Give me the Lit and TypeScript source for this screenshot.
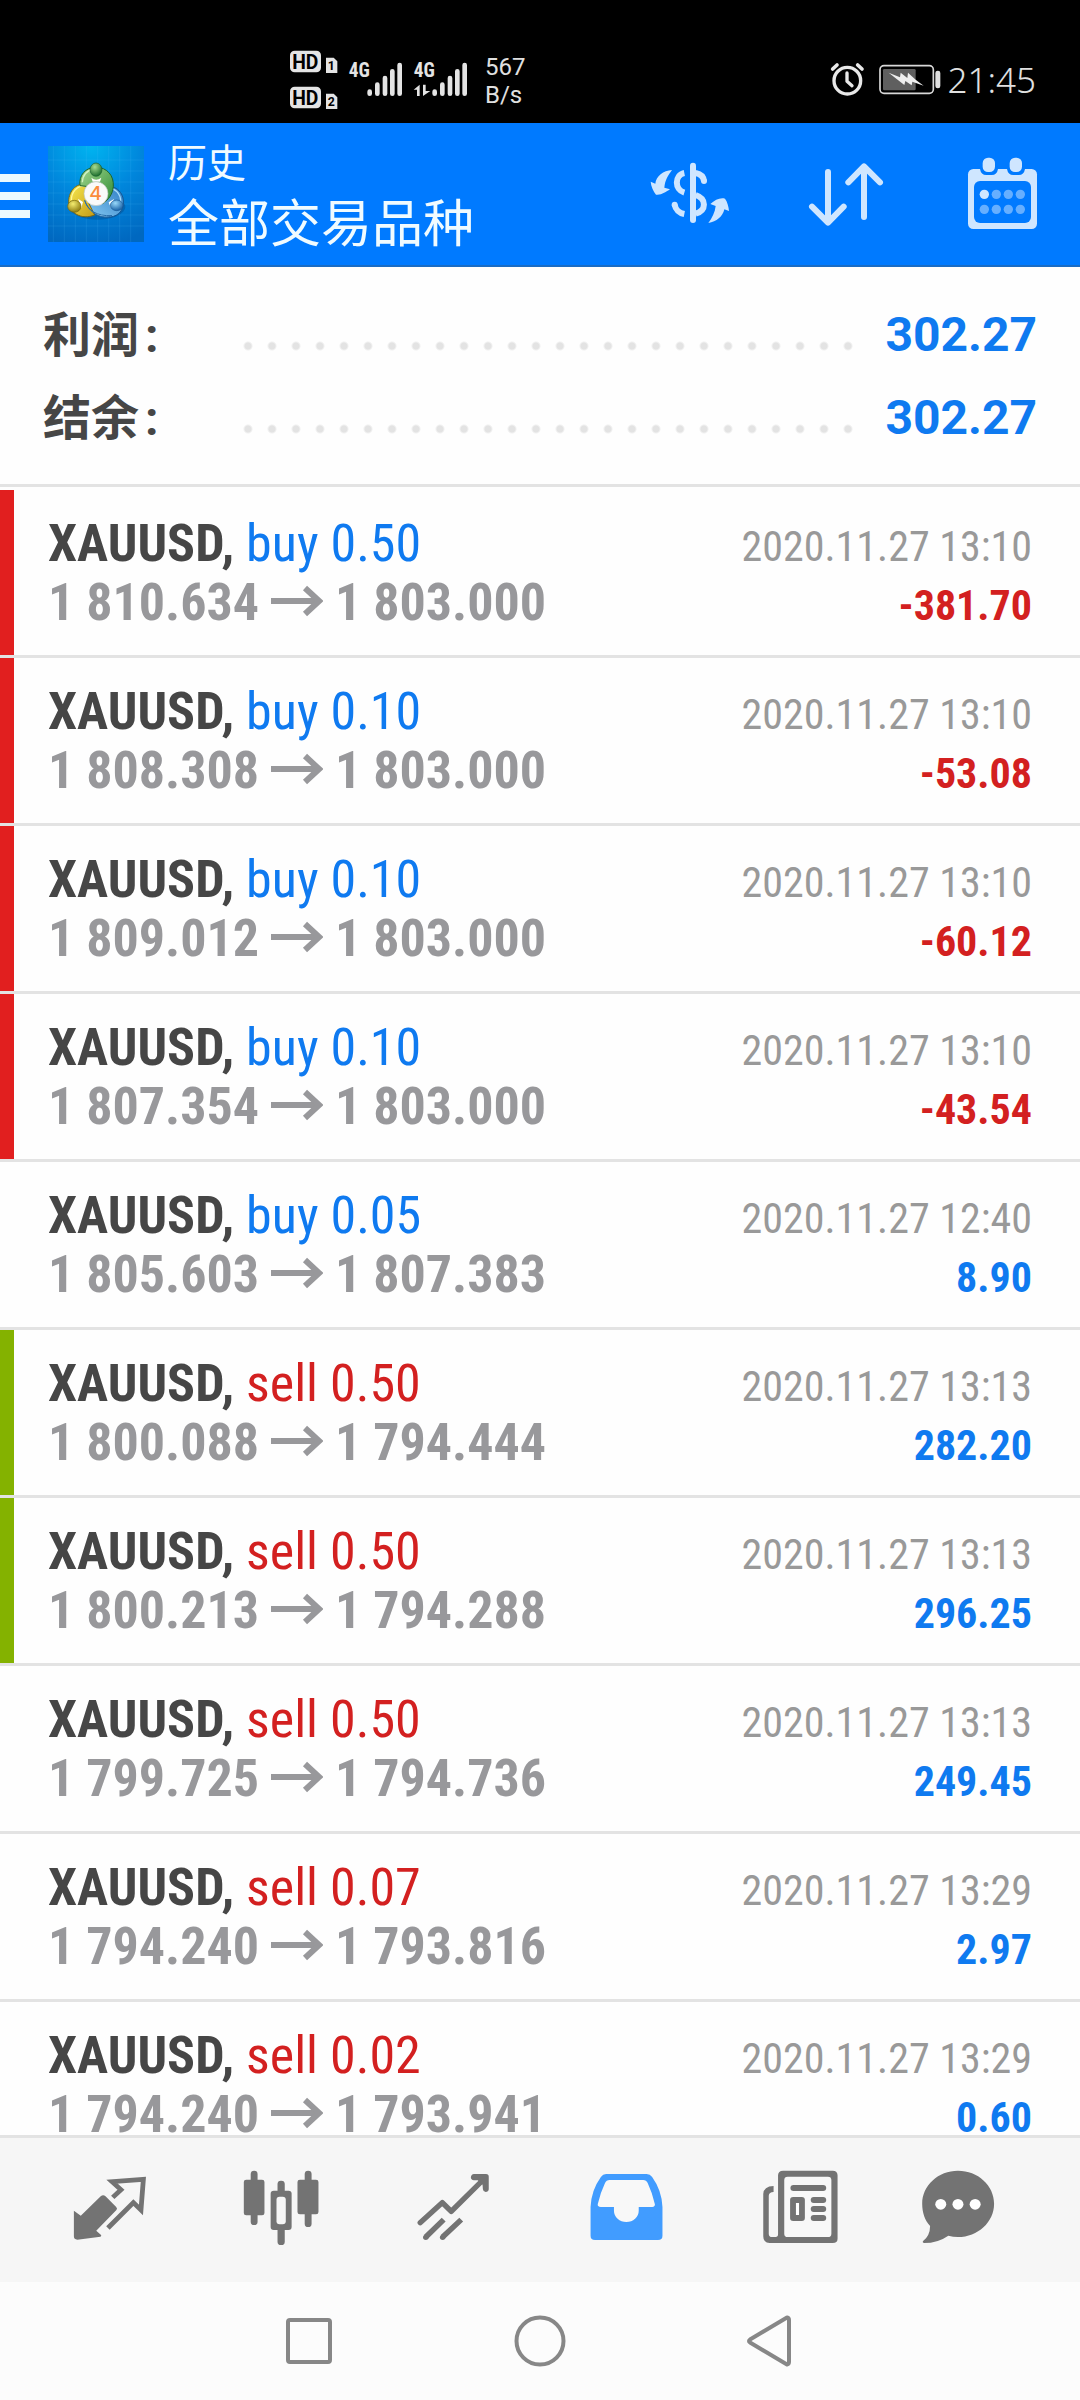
import { LitElement, html, css, svg } from "lit";
import { customElement, property } from "lit/decorators.js";
import { classMap } from "lit/directives/class-map.js";

interface Deal {
  side: "buy" | "sell";
  volume: string;
  open: string;
  close: string;
  time: string;
  profit: string;
  mark?: "sl" | "tp";
}

const deals: Deal[] = [
  { side: "buy", volume: "0.50", open: "1 810.634", close: "1 803.000", time: "2020.11.27 13:10", profit: "-381.70", mark: "sl" },
  { side: "buy", volume: "0.10", open: "1 808.308", close: "1 803.000", time: "2020.11.27 13:10", profit: "-53.08", mark: "sl" },
  { side: "buy", volume: "0.10", open: "1 809.012", close: "1 803.000", time: "2020.11.27 13:10", profit: "-60.12", mark: "sl" },
  { side: "buy", volume: "0.10", open: "1 807.354", close: "1 803.000", time: "2020.11.27 13:10", profit: "-43.54", mark: "sl" },
  { side: "buy", volume: "0.05", open: "1 805.603", close: "1 807.383", time: "2020.11.27 12:40", profit: "8.90" },
  { side: "sell", volume: "0.50", open: "1 800.088", close: "1 794.444", time: "2020.11.27 13:13", profit: "282.20", mark: "tp" },
  { side: "sell", volume: "0.50", open: "1 800.213", close: "1 794.288", time: "2020.11.27 13:13", profit: "296.25", mark: "tp" },
  { side: "sell", volume: "0.50", open: "1 799.725", close: "1 794.736", time: "2020.11.27 13:13", profit: "249.45" },
  { side: "sell", volume: "0.07", open: "1 794.240", close: "1 793.816", time: "2020.11.27 13:29", profit: "2.97" },
  { side: "sell", volume: "0.02", open: "1 794.240", close: "1 793.941", time: "2020.11.27 13:29", profit: "0.60" },
];

const signalBars = (x: number) => svg`
  <g stroke="#e4e4e4" stroke-width="14" stroke-linecap="round">
    <path d="M${x} 185v6M${x + 23} 164v27M${x + 46} 144v47M${x + 68} 124v67M${x + 90} 105v86"/>
  </g>`;

@customElement("status-bar")
export class StatusBar extends LitElement {
  static styles = css`
    :host {
      display: flex;
      align-items: flex-start;
      justify-content: space-between;
      height: 123px;
      flex: none;
      box-sizing: border-box;
      padding: 48px 44px 0 290px;
      background: #000;
      color: #e0e0e0;
      font-family: Roboto, "Liberation Sans", sans-serif;
    }
    .group { display: flex; align-items: flex-start; }
    .speed {
      margin-left: 17px;
      width: 40px;
      font-size: 24px;
      line-height: 28px;
      text-align: left;
      padding-top: 5px;
    }
    .icons { display: block; }
    .time {
      font: 300 35px/64px "Noto Sans", "Open Sans", sans-serif;
      margin-left: 6px;
    }
    .txt { font-family: Roboto, "Liberation Sans", sans-serif; font-weight: 700; }
    .narrow { font-family: "Roboto Condensed", "Liberation Sans Narrow", Roboto, sans-serif; font-weight: 700; }
  `;
  render() {
    return html`
      <div class="group">
        <svg class="icons" width="178" height="62" viewBox="60 54 534 186" role="img" aria-label="Signal">
          <rect x="60" y="62" width="93" height="65" rx="14" fill="#e4e4e4"/>
          <text class="txt" x="106" y="116" font-size="58" text-anchor="middle" fill="#000">HD</text>
          <path d="M168 83h23l11 11v35h-34z" fill="#e4e4e4"/>
          <text class="txt" x="184" y="121" font-size="37" text-anchor="middle" fill="#000">1</text>
          <rect x="60" y="170" width="93" height="65" rx="14" fill="#e4e4e4"/>
          <text class="txt" x="106" y="224" font-size="58" text-anchor="middle" fill="#000">HD</text>
          <path d="M168 191h23l11 11v35h-34z" fill="#e4e4e4"/>
          <text class="txt" x="184" y="229" font-size="37" text-anchor="middle" fill="#000">2</text>
          <text class="narrow" x="236" y="142" font-size="58" fill="#e4e4e4">4G</text>
          ${signalBars(299)}
          <text class="narrow" x="431" y="142" font-size="58" fill="#e4e4e4">4G</text>
          ${signalBars(494)}
          <path d="M449 164v34h-8v-19h-10zM459 198v-34h8v19h14z" fill="#e4e4e4"/>
        </svg>
        <div class="speed">567<br />B/s</div>
      </div>
      <div class="group">
        <svg class="icons" width="112" height="56" viewBox="88 24 336 168" role="img" aria-label="Alarm, battery charging">
          <circle cx="140" cy="122" r="40" fill="none" stroke="#e8e8e8" stroke-width="10"/>
          <path d="M139 99v25l15 13" fill="none" stroke="#e8e8e8" stroke-width="10" stroke-linecap="round" stroke-linejoin="round"/>
          <path d="M96 87l13-12M184 87l-13-12" stroke="#e8e8e8" stroke-width="11" stroke-linecap="round"/>
          <rect x="238" y="77" width="160" height="83" rx="12" fill="none" stroke="#d8d8d8" stroke-width="5"/>
          <rect x="247" y="87" width="98" height="64" rx="4" fill="#5f5f5f"/>
          <path d="M264 98l34 14 2-14 20 16 2-16 23 21 24 18-34-12-2 11-19-13-3 12z" fill="#eee"/>
          <rect x="404" y="92" width="15" height="53" rx="7" fill="#e0e0e0"/>
        </svg>
        <span class="time">21:45</span>
      </div>
    `;
  }
}

@customElement("app-header")
export class AppHeader extends LitElement {
  static styles = css`
    :host {
      display: flex;
      align-items: center;
      flex: none;
      height: 144px;
      box-sizing: border-box;
      background: #007aff;
      border-bottom: 2px solid #1a6cc4;
      color: #f0fbff;
      font-family: "Noto Sans CJK SC", sans-serif;
    }
    button { border: 0; padding: 0; background: none; display: block; cursor: pointer; }
    svg { display: block; }
    .menu { width: 48px; flex: none; }
    .titles { flex: 1; padding: 0 0 4px 24px; min-width: 0; }
    .section { margin: 0; font-size: 39px; line-height: 56px; }
    .filter { margin: 0; font-size: 51px; line-height: 64px; font-weight: 400; }
    .actions { display: flex; flex: none; }
    .four { font-family: Inter, sans-serif; font-weight: 500; }
  `;
  render() {
    return html`
      <button class="menu" aria-label="Menu">
        <svg width="48" height="48" viewBox="0 0 48 48" fill="#ebf9ff">
          <path d="M0 4h30v8H0zM0 22h30v8H0zM0 40h30v8H0z"/>
        </svg>
      </button>
      <svg width="96" height="96" viewBox="144 51 288 288" role="img" aria-label="MetaTrader 4">
        <defs>
          <radialGradient id="bg" cx=".45" cy="0" r="1.05">
            <stop offset="0" stop-color="#00b4f0"/><stop offset=".5" stop-color="#0086dc"/><stop offset="1" stop-color="#0068c0"/>
          </radialGradient>
          <linearGradient id="gr" x1="0" y1="0" x2="1" y2="1"><stop offset="0" stop-color="#a4d890"/><stop offset="1" stop-color="#2c8a34"/></linearGradient>
          <linearGradient id="ye" x1="0" y1="0" x2="1" y2="1"><stop offset="0" stop-color="#f8ec50"/><stop offset="1" stop-color="#c79b18"/></linearGradient>
          <linearGradient id="bl" x1="1" y1="0" x2="0" y2="1"><stop offset="0" stop-color="#2d7cc4"/><stop offset="1" stop-color="#88ccf4"/></linearGradient>
          <radialGradient id="hg" cx=".4" cy=".3" r=".7"><stop offset="0" stop-color="#a8dc90"/><stop offset="1" stop-color="#1c6e2c"/></radialGradient>
          <radialGradient id="hy" cx=".4" cy=".3" r=".7"><stop offset="0" stop-color="#f4ec70"/><stop offset="1" stop-color="#8e7c10"/></radialGradient>
          <radialGradient id="hb" cx=".4" cy=".3" r=".7"><stop offset="0" stop-color="#98d8fa"/><stop offset="1" stop-color="#1c64a8"/></radialGradient>
        </defs>
        <path d="M144 51h288v288H144z" fill="url(#bg)"/>
        <path d="M160 51v288M193 51v288M226 51v288M259 51v288M293 51v288M326 51v288M359 51v288M392 51v288M144 93h288M144 126h288M144 159h288M144 192h288M144 225h288M144 258h288M144 291h288" stroke="#5cc4ff" stroke-opacity=".22" stroke-width="2"/>
        <ellipse cx="292" cy="234" rx="84" ry="38" fill="#00407c" opacity=".35"/>
        <!-- three overlapping discs, each with a pale rim and a head -->
        <path d="M300 176C344 160 374 190 370 226C366 258 338 268 310 264C286 260 268 246 260 226z" fill="url(#bl)" stroke="#155693" stroke-width="3"/>
        <path d="M316 180C344 172 364 194 362 222" fill="none" stroke="#a9dcfa" stroke-width="4"/>
        <path d="M270 168C232 156 206 184 206 218C208 252 244 274 284 258L262 214z" fill="url(#ye)" stroke="#796714" stroke-width="3"/>
        <path d="M258 172C230 168 214 190 214 214" fill="none" stroke="#fff79a" stroke-width="4"/>
        <path d="M254 214C262 244 290 262 336 260C306 272 268 254 254 214z" fill="#9ad6f7" stroke="#266ba8" stroke-width="3"/>
        <path d="M240 170C236 138 256 116 288 114C322 116 342 140 340 172C338 196 326 212 308 224L292 176z" fill="url(#gr)" stroke="#1d652c" stroke-width="3"/>
        <path d="M247 160C248 138 262 124 282 120" fill="none" stroke="#d2f2c4" stroke-width="4"/>
        <path d="M274 146q14 12 30 0l-4 12h-22zM234 209l15 10-5 18zM342 210l-16 10 6 16z" fill="#fff"/>
        <ellipse cx="288" cy="122" rx="18" ry="20" fill="url(#hg)" stroke="#1c6030" stroke-width="2"/>
        <ellipse cx="223" cy="232" rx="20" ry="18" fill="url(#hy)" stroke="#766710" stroke-width="2"/>
        <ellipse cx="350" cy="229" rx="19" ry="16" fill="url(#hb)" stroke="#1a5b98" stroke-width="2"/>
        <circle cx="288" cy="194" r="36" fill="#fafafa" stroke="#b9c2bd" stroke-width="2"/>
        <text class="four" x="287" y="214" font-size="58" text-anchor="middle" fill="#fa8c3c">4</text>
      </svg>
      <div class="titles">
        <p class="section">历史</p>
        <h1 class="filter">全部交易品种</h1>
      </div>
      <div class="actions">
        <button aria-label="Symbol">
          <svg width="156" height="142" viewBox="36 9 468 426" fill="none" stroke="#cfe6ff" stroke-width="18">
            <path d="M279 137v163" stroke-linecap="round"/>
            <path d="M253 159C223 165 223 209 253 218"/>
            <path d="M224 254C226 268 238 279 253 282"/>
            <path d="M287 159C303 162 311 172 312 184"/>
            <path d="M287 225C320 236 320 271 287 281"/>
            <circle cx="224" cy="254" r="9" fill="#cfe6ff" stroke="none"/>
            <circle cx="312" cy="183" r="9" fill="#cfe6ff" stroke="none"/>
            <g fill="#cfe6ff" stroke="none">
              <path d="M216 150C190 152 168 168 166 191L152 185C153 198 160 214 168 224C184 226 198 216 210 208L193 203C195 180 205 165 216 150Z"/>
              <path d="M325 309C350 305 368 290 373 268L387 273C386 260 382 245 375 236C360 232 345 240 331 252L347 258C345 277 336 295 325 309Z"/>
            </g>
          </svg>
        </button>
        <button aria-label="Sort">
          <svg width="156" height="142" viewBox="504 9 468 426" fill="none" stroke="#cfe6ff" stroke-width="18" stroke-linecap="round" stroke-linejoin="round">
            <path d="M684 156v150M636 260l48 48 47-48M792 291V141M745 187l47-48 48 48"/>
          </svg>
        </button>
        <button aria-label="Period">
          <svg width="156" height="142" viewBox="972 9 468 426" fill="#cfe6ff">
            <rect x="1104" y="147" width="207" height="180" rx="16"/>
            <rect x="1122" y="183" width="171" height="126" rx="18" fill="#007aff"/>
            <path d="M1140 140h54v7q-3 18-19 18h-16q-16 0-19-18zM1221 140h54v7q-3 18-19 18h-16q-16 0-19-18z" fill="#007aff"/>
            <rect x="1148" y="113" width="37" height="43" rx="16"/>
            <rect x="1229" y="113" width="37" height="43" rx="16"/>
            <circle cx="1153" cy="223" r="14"/>
            <g fill="#66afff">
              <circle cx="1189" cy="223" r="14"/><circle cx="1225" cy="223" r="14"/><circle cx="1261" cy="223" r="14"/>
              <circle cx="1153" cy="268" r="14"/><circle cx="1189" cy="268" r="14"/><circle cx="1225" cy="268" r="14"/><circle cx="1261" cy="268" r="14"/>
            </g>
          </svg>
        </button>
      </div>
    `;
  }
}

@customElement("deal-row")
export class DealRow extends LitElement {
  @property({ attribute: false }) deal!: Deal;
  static styles = css`
    :host {
      display: flex;
      border-bottom: 3px solid #e3e3e3;
      font-family: "Roboto Condensed", "Liberation Sans Narrow", Roboto, sans-serif;
    }
    .mark { width: 14px; flex: none; }
    .sl { background: #e11f1f; }
    .tp { background: #84b200; }
    .body { flex: 1; min-width: 0; padding: 24px 48px 23px 34px; }
    .line {
      display: flex;
      justify-content: space-between;
      align-items: baseline;
      height: 59px;
      font-size: 52px;
      line-height: 59px;
      white-space: nowrap;
    }
    .symbol { font-weight: 700; color: #464646; }
    .buy, .gain { color: #0f7af0; }
    .sell, .loss { color: #d32020; }
    .prices { font-weight: 700; color: #98989b; }
    .arrow { display: inline-block; }
    .time, .profit { font-size: 42px; }
    .time { color: #999; }
    .profit { font-weight: 700; }
  `;
  render() {
    const d = this.deal;
    const loss = d.profit.startsWith("-");
    return html`
      <span class=${classMap({ mark: true, sl: d.mark === "sl", tp: d.mark === "tp" })}></span>
      <div class="body">
        <div class="line">
          <span><span class="symbol">XAUUSD,</span> <span class=${d.side}>${d.side} ${d.volume}</span></span>
          <span class="time">${d.time}</span>
        </div>
        <div class="line">
          <span class="prices">${d.open}
            <svg class="arrow" width="52" height="36" viewBox="0 0 52 36" fill="none" stroke="#98989b" stroke-width="6" role="img" aria-label="to">
              <path d="M0 17H46"/><path d="M34 4L48 17L34 30"/>
            </svg>
            ${d.close}</span>
          <span class=${classMap({ profit: true, loss, gain: !loss })}>${d.profit}</span>
        </div>
      </div>
    `;
  }
}

@customElement("tab-bar")
export class TabBar extends LitElement {
  static styles = css`
    :host {
      display: flex;
      flex: none;
      padding: 0 24px;
      background: #f6f6f6;
      border-top: 3px solid #e3e3e3;
    }
    button {
      flex: 1;
      display: flex;
      justify-content: center;
      border: 0;
      padding: 0;
      background: none;
      cursor: pointer;
    }
    svg { display: block; flex: none; }
  `;
  private icon(left: number, shapes: unknown) {
    return svg`<svg width="172" height="144" viewBox="${left} 114 500 432" preserveAspectRatio="none" fill="#737373">${shapes}</svg>`;
  }
  render() {
    return html`
      <button aria-label="Quotes">${this.icon(70, svg`
        <path d="M215 332l20 15 58-58q7-7 14 0l31 32q5 5 0 10l-58 61 14 13q2 4-2 5l-67 9q-10 0-10-10z"/>
        <path d="M328 292l24-23-26-24 91-7-7 92-22-22-74 76" fill="none" stroke="#737373" stroke-width="14"/>`)}</button>
      <button aria-label="Chart">${this.icon(570, svg`
        <rect x="729" y="212" width="20" height="163" rx="10"/><rect x="709" y="239" width="60" height="107" rx="7"/>
        <rect x="886" y="212" width="20" height="169" rx="10"/><rect x="865" y="239" width="61" height="104" rx="7"/>
        <rect x="807" y="242" width="21" height="193" rx="10"/><rect x="787" y="272" width="61" height="118" rx="9"/>
        <rect x="804" y="290" width="27" height="83" rx="9" fill="#f6f6f6"/>`)}</button>
      <button aria-label="Trade">${this.icon(1069, svg`
        <g fill="none" stroke="#737373" stroke-width="16">
          <path d="M1221 368l64-60 26 26 98-100" stroke-linejoin="round" stroke-linecap="round"/>
          <path d="M1237 411l52-52M1286 411l54-52"/>
        </g>
        <circle cx="1237" cy="412" r="8"/><circle cx="1286" cy="412" r="8"/>
        <path d="M1377 222h35q8 0 8 8v38q-1 8-9 8-7 0-8-8l-1-14-14-13h-11q-9-1-9-9 1-9 9-10z"/>`)}</button>
      <button aria-label="History" aria-current="page">${this.icon(0, svg`
        <path d="M192 222h118q10 0 16 9 28 40 30 90v86q0 13-13 13H160q-13 0-13-13v-86q2-50 30-90 6-9 15-9z" fill="#419cff"/>
        <path d="M202 240h98q9 0 13 9 13 28 21 64 1 7-8 8h-39v11a36 34 0 0 1-72 0v-11h-38q-11-1-9-9 8-35 21-63 4-9 13-9z" fill="#f8f8f8"/>`)}</button>
      <button aria-label="News">${this.icon(498, svg`
        <path d="M705 212h144q14 0 14 14v190q0 13-14 13H665q-18-1-18-20V282q1-23 30-24v18q-13 0-14 11v114q0 10 10 10h10q7 0 7-8V226q0-14 15-14z"/>
        <rect x="708" y="230" width="137" height="181" rx="10" fill="#f8f8f8"/>
        <rect x="726" y="255" width="104" height="18" rx="9"/>
        <rect x="725" y="291" width="43" height="72" rx="9"/><path d="M742 309h9v36h-9z" fill="#fff"/>
        <rect x="785" y="291" width="45" height="18" rx="9"/><rect x="785" y="318" width="45" height="18" rx="9"/><rect x="785" y="345" width="45" height="18" rx="9"/>`)}</button>
      <button aria-label="Messages">${this.icon(998, svg`
        <path d="M1213 212c58 0 105 44 105 99s-47 100-105 100q-14 0-28-4-30 22-71 22-5-1-3-5 21-17 21-46c-15-17-23-40-23-67 0-55 47-99 104-99z"/>
        <g fill="#fff"><circle cx="1163" cy="313" r="16"/><circle cx="1213" cy="313" r="16"/><circle cx="1263" cy="313" r="16"/></g>`)}</button>
    `;
  }
}

@customElement("system-nav")
export class SystemNav extends LitElement {
  static styles = css`
    :host { display: flex; justify-content: center; flex: none; height: 118px; background: #fcfcfc; }
    button {
      width: 231px;
      display: flex;
      align-items: center;
      justify-content: center;
      border: 0;
      padding: 0;
      background: none;
      cursor: pointer;
    }
    svg { fill: none; stroke: #878787; stroke-width: 4px; stroke-linejoin: round; }
  `;
  render() {
    return html`
      <button aria-label="Recents"><svg width="60" height="60" viewBox="-30 -30 60 60"><rect x="-21" y="-21" width="42" height="42" rx="2"/></svg></button>
      <button aria-label="Home"><svg width="60" height="60" viewBox="-30 -30 60 60"><circle r="23.500"/></svg></button>
      <button aria-label="Back"><svg width="60" height="60" viewBox="-30 -30 60 60"><path d="M16 -23.500Q18 -23 18 -21V21Q18 23 16 23.500L-21 1.500Q-23 0 -21 -1.500Z"/></svg></button>
    `;
  }
}

@customElement("app-root")
export class AppRoot extends LitElement {
  static styles = css`
    :host {
      display: flex;
      flex-direction: column;
      height: 100vh;
      background: #fefefe;
      font-family: Roboto, "Noto Sans CJK SC", sans-serif;
    }
    main { flex: 1; min-height: 0; overflow-y: auto; scrollbar-width: none; }
    .summary {
      margin: 0;
      padding: 26px 43px 51px 43px;
      border-bottom: 3px solid #e3e3e3;
    }
    .total { display: flex; height: 83px; font-size: 48px; line-height: 83px; font-weight: 700; }
    .total:last-child { height: 57px; }
    .total dt {
      display: flex;
      align-items: baseline;
      gap: 6px;
      flex: none;
      width: 200px;
      color: #464646;
      font-family: "Noto Sans CJK SC", sans-serif;
      line-height: 77px;
    }
    .colon { font-family: Roboto, sans-serif; }
    .total dd { display: flex; flex: 1; margin: 0; color: #0f7af0; }
    .total dd::before {
      content: "";
      flex: 1;
      margin-right: 24px;
      height: 83px;
      background: radial-gradient(circle at 5px 53px, #e3e3e3 3px, transparent 5px) 0 0 / 24px 83px repeat-x;
    }
    .deals { margin: 3px 0 0; padding: 0; list-style: none; }
  `;
  render() {
    return html`
      <status-bar></status-bar>
      <app-header></app-header>
      <main>
        <dl class="summary">
          ${["利润", "结余"].map((name) => html`
            <div class="total"><dt>${name}<span class="colon">:</span></dt><dd>302.27</dd></div>
          `)}
        </dl>
        <ul class="deals">
          ${deals.map((deal) => html`<li><deal-row .deal=${deal}></deal-row></li>`)}
        </ul>
      </main>
      <tab-bar></tab-bar>
      <system-nav></system-nav>
    `;
  }
}
